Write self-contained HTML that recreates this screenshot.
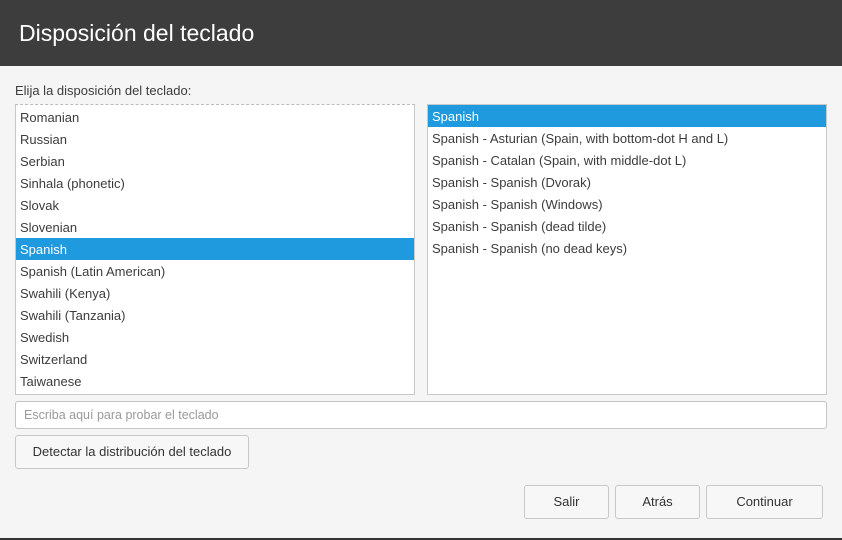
<!DOCTYPE html>
<html><head><style>
*{box-sizing:border-box;margin:0;padding:0}
body{width:842px;height:540px;background:#f5f5f5;font-family:"Liberation Sans","DejaVu Sans",sans-serif;font-size:13px;color:#3c3c3c;position:relative;overflow:hidden}
.hdr{position:absolute;left:0;top:0;width:842px;height:66px;background:#3d3d3d;color:#fff;font-size:23px;padding:20px 0 0 19px}
.lbl{position:absolute;left:15px;top:83px}
.list{position:absolute;top:104px;height:291px;width:400px;background:#fff;border:1px solid #c8c8c8;overflow:hidden}
.row{height:22px;line-height:23px;padding-left:4px;white-space:nowrap}
.sel{background:#1f9ade;color:#fff}
.inp{position:absolute;left:15px;top:401px;width:812px;height:28px;background:#fff;border:1px solid #c4c4c4;border-radius:3px;color:#9a9a9a;padding:6px 8px;font-size:12.5px}
.btn{position:absolute;height:34px;background:#f7f7f7;border:1px solid #c8c8c8;border-radius:3px;text-align:center;line-height:32px;color:#333}
.bot{position:absolute;left:0;top:538px;width:842px;height:2px;background:#333}
</style></head><body>
<div class="hdr">Disposición del teclado</div>
<div class="lbl">Elija la disposición del teclado:</div>
<div class="list" style="left:15px;border-top:1px dashed #bbb">
<div style="height:1px"></div>
<div class="row">Romanian</div><div class="row">Russian</div><div class="row">Serbian</div><div class="row">Sinhala (phonetic)</div><div class="row">Slovak</div><div class="row">Slovenian</div><div class="row sel">Spanish</div><div class="row">Spanish (Latin American)</div><div class="row">Swahili (Kenya)</div><div class="row">Swahili (Tanzania)</div><div class="row">Swedish</div><div class="row">Switzerland</div><div class="row">Taiwanese</div>
</div>
<div class="list" style="left:427px">
<div class="row sel">Spanish</div><div class="row">Spanish - Asturian (Spain, with bottom-dot H and L)</div><div class="row">Spanish - Catalan (Spain, with middle-dot L)</div><div class="row">Spanish - Spanish (Dvorak)</div><div class="row">Spanish - Spanish (Windows)</div><div class="row">Spanish - Spanish (dead tilde)</div><div class="row">Spanish - Spanish (no dead keys)</div>
</div>
<div class="inp">Escriba aquí para probar el teclado</div>
<div class="btn" style="left:15px;top:435px;width:234px">Detectar la distribución del teclado</div>
<div class="btn" style="left:524px;top:485px;width:85px">Salir</div>
<div class="btn" style="left:615px;top:485px;width:85px">Atrás</div>
<div class="btn" style="left:706px;top:485px;width:117px">Continuar</div>
<div class="bot"></div>
</body></html>
